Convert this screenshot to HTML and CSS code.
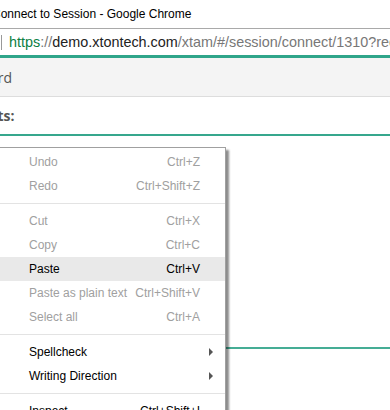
FILE: index.html
```html
<!DOCTYPE html>
<html lang="en">
<head>
  <meta charset="UTF-8" />
  <meta name="viewport" content="width=device-width, initial-scale=1.0"/>
  <title>Connect to Session</title>
  <link rel="stylesheet" href="styles.css">
</head>
<body>
  <!-- Browser chrome -->
  <div class="titlebar"><span class="title">Connect to Session - Google Chrome</span></div>
  <div class="omnibox">
    <span class="caret"></span>
    <span class="url"><span class="scheme">https</span><span class="dim">://</span>demo.xtontech.com<span class="dim">/xtam/#/session/connect/1310?rec</span></span>
  </div>

  <!-- Page -->
  <div class="page">
    <div class="toolbar"><span class="cut-text">Password</span></div>
    <div class="section"><span class="cut-text label">Shortcuts:</span></div>
    <div class="body-area">
      <div class="field-line"></div>
    </div>
  </div>

  <!-- Context menu -->
  <div class="menu">
    <div class="item disabled"><span>Undo</span><span>Ctrl+Z</span></div>
    <div class="item disabled"><span>Redo</span><span>Ctrl+Shift+Z</span></div>
    <div class="sep"></div>
    <div class="item disabled"><span>Cut</span><span>Ctrl+X</span></div>
    <div class="item disabled"><span>Copy</span><span>Ctrl+C</span></div>
    <div class="item active"><span>Paste</span><span>Ctrl+V</span></div>
    <div class="item disabled"><span>Paste as plain text</span><span>Ctrl+Shift+V</span></div>
    <div class="item disabled"><span>Select all</span><span>Ctrl+A</span></div>
    <div class="sep"></div>
    <div class="item"><span>Spellcheck</span><span class="arrow"></span></div>
    <div class="item"><span>Writing Direction</span><span class="arrow"></span></div>
    <div class="sep"></div>
    <div class="item"><span>Inspect</span><span>Ctrl+Shift+I</span></div>
  </div>
</body>
</html>
```

FILE: styles.css
```css
* {
  margin: 0;
  padding: 0;
  box-sizing: border-box;
}

body {
  background: #fff;
  font-family: "Liberation Sans", Arial, sans-serif;
  width: 390px;
  height: 410px;
  overflow: hidden;
  position: relative;
}

.titlebar {
  height: 28px;
  display: flex;
  align-items: center;
  white-space: nowrap;
  overflow: hidden;
  font-size: 12px;
  color: #000;
}

.title {
  margin-left: -8px;
}

.omnibox {
  height: 27px;
  border-top: 1px solid #a9a9a9;
  display: flex;
  align-items: center;
  white-space: nowrap;
  overflow: hidden;
}

.caret {
  width: 1px;
  height: 15px;
  background: #999;
  margin-left: 1px;
  margin-right: 7px;
  flex-shrink: 0;
}

.url {
  font-size: 14.4px;
  color: #222;
}

.scheme {
  color: #0b8043;
}

.dim {
  color: #777;
}

.page {
  border-top: 3px solid #2fa58a;
  font-family: "Open Sans", sans-serif;
  color: #555;
}

.toolbar {
  height: 39px;
  background: #f4f4f4;
  border-bottom: 1px solid #ddd;
  display: flex;
  align-items: center;
  overflow: hidden;
  font-size: 14px;
}

.section {
  height: 39px;
  border-bottom: 2px solid #36a78d;
  display: flex;
  align-items: center;
  overflow: hidden;
  font-size: 14px;
}

.cut-text {
  margin-left: -51px;
  white-space: nowrap;
}

.label {
  font-weight: bold;
  margin-left: -57px;
}

.body-area {
  padding-top: 211px;
}

.field-line {
  height: 2px;
  background: #45ad95;
}

/* context menu sits over the page */
.menu {
  position: absolute;
  left: -4px;
  top: 147px;
  width: 230px;
  background: #fff;
  border: 1px solid #a0a0a0;
  padding-top: 2px;
  box-shadow: 3px 3px 2px rgba(0, 0, 0, 0.45);
  font-family: "Liberation Sans", Arial, sans-serif;
  font-size: 12px;
  color: #000;
}

.item {
  height: 24px;
  display: flex;
  align-items: center;
  justify-content: space-between;
  padding-left: 32px;
  padding-right: 25px;
}

.item.disabled {
  color: #a0a0a0;
}

.item.active {
  background: #e9e9e9;
}

.arrow {
  width: 0;
  height: 0;
  border-top: 4px solid transparent;
  border-bottom: 4px solid transparent;
  border-left: 4px solid #555;
  margin-right: -13px;
}

.sep {
  height: 11px;
  position: relative;
}

.sep::after {
  content: "";
  position: absolute;
  left: 0;
  right: 0;
  top: 5px;
  height: 1px;
  background: #e3e3e3;
}
```
